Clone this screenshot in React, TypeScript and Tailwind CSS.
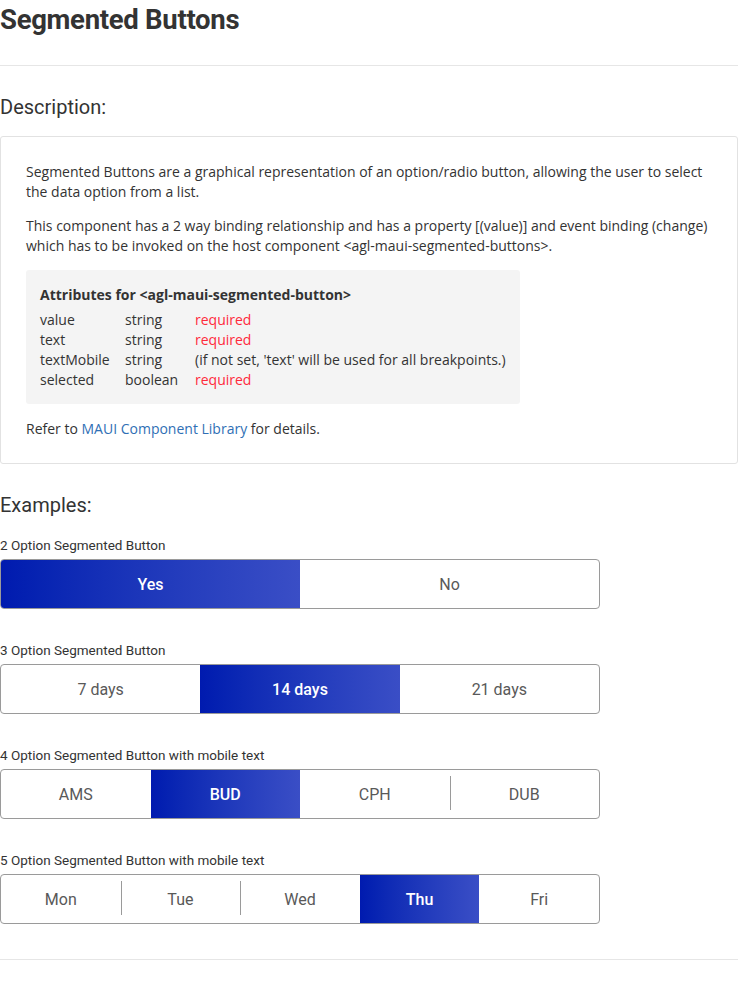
import React from "react";

const T = { fontFamily: "Roboto, 'Noto Sans', sans-serif" } as const;
const B = { fontFamily: "'Open Sans', 'Noto Sans', sans-serif" } as const;

function Segmented({ options, selected }: { options: string[]; selected: number }) {
  return (
    <div className="flex h-[50px] w-[600px] overflow-hidden rounded-[4px] border border-[#9a9a9a]" style={T}>
      {options.map((o, i) => {
        const isSel = i === selected;
        const showDivider = i > 0 && !isSel && i - 1 !== selected;
        return (
          <div key={o} className="relative flex flex-1 items-center justify-center">
            {showDivider && <div className="absolute left-0 top-[6px] h-[34px] w-px bg-[#9a9a9a]" />}
            {isSel ? (
              <div className="-my-px flex h-[50px] w-full items-center justify-center bg-gradient-to-r from-[#001aaf] to-[#3a4ec6] pt-[2px] text-[16px] font-medium text-white">
                {o}
              </div>
            ) : (
              <span className="pt-[2px] text-[16px] text-[#595959]">{o}</span>
            )}
          </div>
        );
      })}
    </div>
  );
}

function Example({ title, options, selected }: { title: string; options: string[]; selected: number }) {
  return (
    <div className="flex flex-col">
      <div className="pt-px text-[13.5px] leading-[18px] text-[#333]" style={T}>{title}</div>
      <div className="mt-[5px]">
        <Segmented options={options} selected={selected} />
      </div>
    </div>
  );
}

export default function App() {
  return (
    <div className="min-h-[985px] w-full bg-white text-[#333]">
      <h1 className="text-[27.5px] font-bold leading-[40px] tracking-[-0.3px] text-[#333]" style={T}>Segmented Buttons</h1>
      <div className="mt-[25px] border-t border-[#e6e6e6]" />
      <h2 className="mt-[27px] text-[20px] leading-[28px] text-[#333]" style={T}>Description:</h2>
      <div className="mt-[15px] rounded-[3px] border border-[#e2e2e2] px-[25px] pb-[24px] pt-[25px] text-[14px] leading-[20px] text-[#333]" style={B}>
        <p>Segmented Buttons are a graphical representation of an option/radio button, allowing the user to select the data option from a list.</p>
        <p className="mt-[14px]">This component has a 2 way binding relationship and has a property [(value)] and event binding (change) which has to be invoked on the host component &lt;agl-maui-segmented-buttons&gt;.</p>
        <div className="mt-[14px] w-[494px] rounded-[3px] bg-[#f4f4f4] px-[14px] pb-[14px] pt-[15px]">
          <div className="font-bold">Attributes for &lt;agl-maui-segmented-button&gt;</div>
          <div className="mt-[5px] grid grid-cols-[85px_70px_1fr]">
            <span>value</span><span>string</span><span className="text-[#ff2a3c]">required</span>
            <span>text</span><span>string</span><span className="text-[#ff2a3c]">required</span>
            <span>textMobile</span><span>string</span><span>(if not set, 'text' will be used for all breakpoints.)</span>
            <span>selected</span><span>boolean</span><span className="text-[#ff2a3c]">required</span>
          </div>
        </div>
        <p className="mt-[15px]">Refer to <span className="text-[#2f6fb5]">MAUI Component Library</span> for details.</p>
      </div>
      <h2 className="mt-[27px] text-[20px] leading-[28px] text-[#333]" style={T}>Examples:</h2>
      <div className="mt-[16px] flex flex-col gap-[31px]">
        <Example title="2 Option Segmented Button" options={["Yes", "No"]} selected={0} />
        <Example title="3 Option Segmented Button" options={["7 days", "14 days", "21 days"]} selected={1} />
        <Example title="4 Option Segmented Button with mobile text" options={["AMS", "BUD", "CPH", "DUB"]} selected={1} />
        <Example title="5 Option Segmented Button with mobile text" options={["Mon", "Tue", "Wed", "Thu", "Fri"]} selected={3} />
      </div>
      <div className="mt-[35px] border-t border-[#e6e6e6]" />
    </div>
  );
}
